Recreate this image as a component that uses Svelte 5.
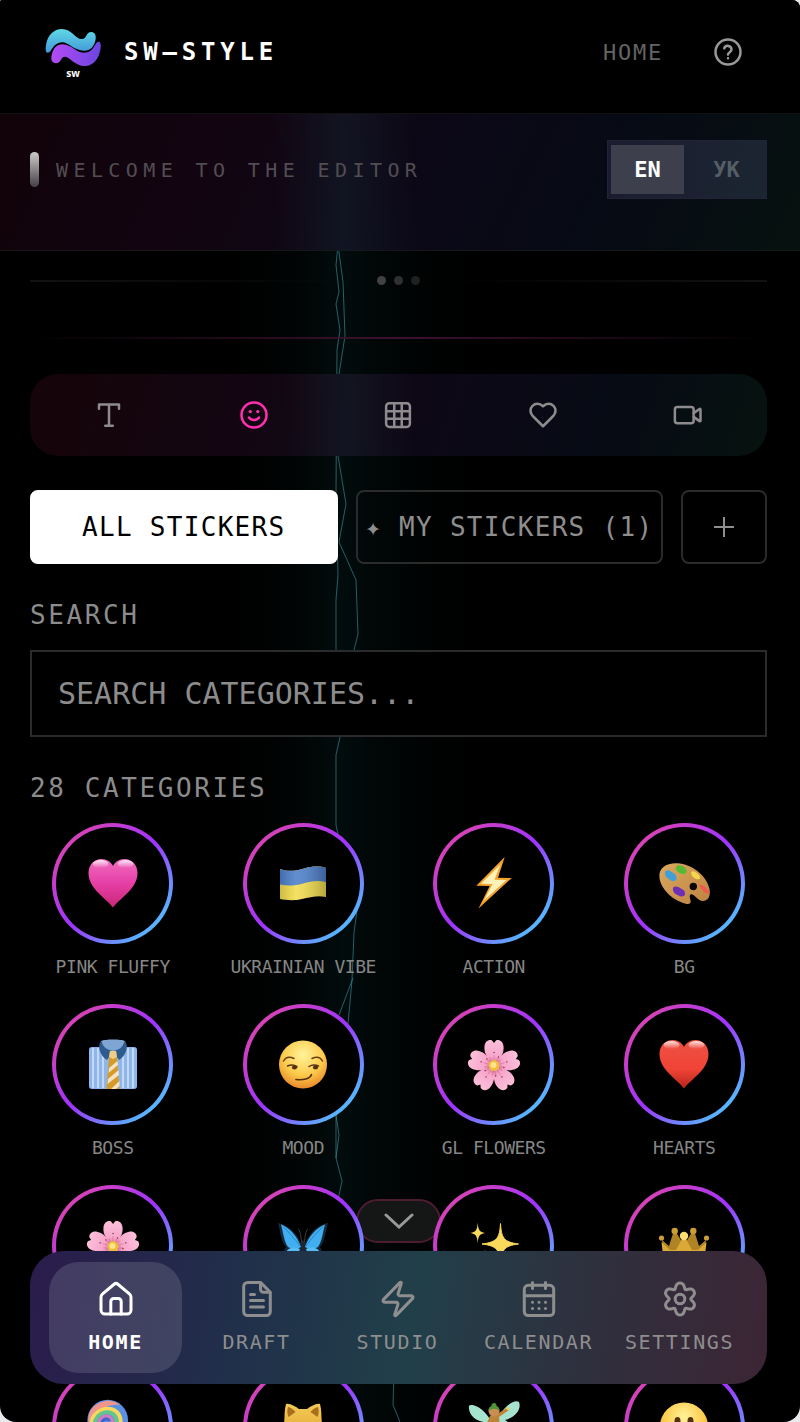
<script lang="ts">
  type Category = { name: string; icon: string };

  const tools = ['Text', 'Stickers', 'Grid', 'Favorites', 'Video'];
  const navItems = ['Home', 'Draft', 'Studio', 'Calendar', 'Settings'];

  const categories: Category[] = [
    { name: 'Pink Fluffy', icon: 'pinkHeart' },
    { name: 'Ukrainian Vibe', icon: 'flag' },
    { name: 'Action', icon: 'bolt' },
    { name: 'BG', icon: 'palette' },
    { name: 'Boss', icon: 'tie' },
    { name: 'Mood', icon: 'smirk' },
    { name: 'GL Flowers', icon: 'flower' },
    { name: 'Hearts', icon: 'redHeart' },
    { name: '', icon: 'flower' },
    { name: '', icon: 'butterfly' },
    { name: '', icon: 'sparkles' },
    { name: '', icon: 'crown' },
    { name: '', icon: 'lollipop' },
    { name: '', icon: 'cat' },
    { name: '', icon: 'fairy' },
    { name: '', icon: 'smile' }
  ];

  let lang = $state('EN');
  let activeTool = $state('Stickers');
  let activeTab = $state('all');
  let activeNav = $state('Home');
  let query = $state('');

  let visible = $derived(
    categories.filter((c) => c.name.toLowerCase().includes(query.toLowerCase()))
  );

  const heart =
    'M26 49.500C20 41 1.500 31 1.500 15C1.500 6.500 7.500 1 14.500 1C20 1 24 4 26 8C28 4 32 1 37.500 1C44.500 1 50.500 6.500 50.500 15C50.500 31 32 41 26 49.500Z';

  const shine = `
    <ellipse cx="13.500" cy="6" rx="8" ry="4" fill="url(#shine)"/>
    <ellipse cx="38.500" cy="6" rx="8" ry="4" fill="url(#shine)"/>`;

  const petals = [0, 72, 144, 216, 288]
    .map(
      (a) => `<g transform="rotate(${a} 26 27)">
        <path d="M26 25C20 21 15.500 14 16.500 7C17 2.500 21 0 24 1.500L26 4L28 1.500C31 0 35 2.500 35.500 7C36.500 14 32 21 26 25Z" fill="url(#petal)"/>
        <path d="M26 24V16M23.500 22L22 18M28.500 22L30 18" stroke="#d3628f" stroke-width=".5" fill="none"/>
        <circle cx="26" cy="13.500" r=".7" fill="#7b2846"/>
        <circle cx="30.500" cy="18" r=".7" fill="#7b2846"/>
      </g>`
    )
    .join('');

  const art: Record<string, string> = {
    pinkHeart: `<path d="${heart}" fill="url(#pink)"/>${shine}`,
    redHeart: `<path d="${heart}" fill="url(#red)"/>${shine}`,
    flag: `
      <path d="M3 11C11 14 19 13 27 10.500C36 8 43 8 49 10V39C41 37 33 39 25 41C17 43 9 42 3 41Z" fill="#f3dc4c"/>
      <path d="M3 11C11 14 19 13 27 10.500C36 8 43 8 49 10V24C41 22 34 23 26 25.500C18 28 10 28 3 26.500Z" fill="#4d7fcb"/>
      <path d="M3 11C11 14 19 13 27 10.500C36 8 43 8 49 10V39C41 37 33 39 25 41C17 43 9 42 3 41Z" fill="url(#fold)"/>`,
    bolt: `
      <path d="M36.700 -1L8.300 27.700L21.700 28L10.500 50.500L43.700 20L30 19.700Z" fill="#f5a32c"/>
      <path d="M32.500 6.500L13 25.800L24.500 26L16 42.500L38.500 22L26.500 21.700Z" fill="#fff2b8"/>`,
    palette: `
      <path d="M1.500 20C0 9 10 4 22 5.500C37 8 49 19 51.500 31C53 38 50 43 45 43C40 43 38 38 34.500 36.500C31 35 31.500 39 32.500 42C33.500 45.500 31 47 27 45.500C14 42 3 31 1.500 20Z" fill="url(#wood)"/>
      <circle cx="35.300" cy="28.500" r="3.700" fill="#0b0705"/>
      <path d="M7 14C10 10 13 14 16 15.500C18.500 17 19 20 18 22C15 25 12 22 10 20.500C7.500 19 7 17 7 14Z" fill="#3f9fd8"/>
      <path d="M18 9C20 6 24 7.500 26 9C28.500 11 29.500 14 27.500 15.500C24 17 21 15 19.500 13.500C18 12 17.500 11 18 9Z" fill="#56b934"/>
      <path d="M33 14C35 12 38 14 40 16C42 18 43 20 41.500 21C38 22 36 20 34.500 18.500C33.500 17 33 15.500 33 14Z" fill="#f5d64b"/>
      <path d="M41.500 27C44 26 47 29 49 31C51 33 52 35 50.500 35.500C47.500 36 45 33 43.500 31C42 29 41.500 28 41.500 27Z" fill="#ef5a4c"/>
      <path d="M15 30C17 27 21 29 23.500 31C26.500 32 28 35 26.500 37.500C23 40 20 37 18.500 36.500C15.500 35 14.500 32 15 30Z" fill="#6d2db5"/>`,
    tie: `
      <rect x="2" y="8" width="48" height="42" rx="3" fill="#8fb6e8"/>
      <path d="M6 9V49M11 9V49M16 9V49M36 9V49M41 9V49M46 9V49" stroke="#d3e4f7" stroke-width="1.500"/>
      <path d="M14 2C18 0 34 0 38 2L34 12H18Z" fill="#7fa6d2"/>
      <path d="M14 2C10 7 13 17 20 21L26 12C20 11 16 8 14 2Z" fill="#2e5c90"/>
      <path d="M38 2C42 7 39 17 32 21L26 12C32 11 36 8 38 2Z" fill="#2e5c90"/>
      <path d="M23 12H29L30 19L32.500 50H19.500L22 19Z" fill="#d69a28"/>
      <path d="M22 29L30.500 22L31 26L21.500 34ZM21 40L31.500 31L32 36L20.500 45ZM24 50L32.500 42V47L29 50Z" fill="#f4e3c4"/>
      <path d="M23 12H29L30 18L26 20L22 18Z" fill="#efcc88"/>`,
    smirk: `
      <circle cx="26" cy="25.500" r="24" fill="url(#face)"/>
      <path d="M6.500 22C9 17.500 13 17.500 17 19.500M35 19.500C39 17.500 43 17.500 45.500 22" stroke="#6b3d12" stroke-width="1.500" fill="none" stroke-linecap="round"/>
      <path d="M10.500 27C14 25.500 17 25.500 20 27.500M32 27.500C35 25.500 38 25.500 41.500 27" stroke="#54300e" stroke-width="1.500" fill="none" stroke-linecap="round"/>
      <ellipse cx="17.500" cy="28.500" rx="2.600" ry="2" fill="#54300e"/>
      <ellipse cx="38.500" cy="28.500" rx="2.600" ry="2" fill="#54300e"/>
      <path d="M19 40.500C26 41.500 33 40 34.500 35.500" stroke="#54300e" stroke-width="1.600" fill="none" stroke-linecap="round"/>`,
    flower: `${petals}<circle cx="26" cy="26.500" r="5.500" fill="#eebd3c"/><circle cx="25.500" cy="26" r="3" fill="#fbe489"/>`,
    butterfly: `
      <path d="M25 26C21 14 12 5 1 3C3 10 4 22 9 27C5 32 8 40 13 44C19 48 25 38 26 31C27 38 33 48 39 44C44 40 47 32 43 27C48 22 49 10 51 3C40 5 31 14 27 26Z" fill="#15283c"/>
      <path d="M24 27C20 16 13 8 4 4.500C6 11 7 22 11 27C15 29 20 29 24 27ZM28 27C32 16 39 8 48 4.500C46 11 45 22 41 27C37 29 32 29 28 27Z" fill="#40aef0"/>
      <path d="M23 29C17 26 9 28 9 34C11 42 19 42 23 29ZM29 29C35 26 43 28 43 34C41 42 33 42 29 29Z" fill="#56bdf6"/>
      <path d="M23 26C17 18 12 12 6 7M29 26C35 18 40 12 46 7" stroke="#2787c8" stroke-width="1" fill="none"/>
      <path d="M25 25C24 18 24 13 21.500 9M27 25C28 18 28 13 30.500 9" stroke="#3a3a3a" stroke-width="1" fill="none"/>
      <ellipse cx="26" cy="29" rx="2" ry="9" fill="#20252c"/>`,
    sparkles: `
      <path d="M32.500 3.500C33.500 18 35.500 22 50.500 24C35.500 26 33.500 30 32.500 45C31.500 30 29.500 26 14 24C29.500 22 31.500 18 32.500 3.500Z" fill="#f9d85b" stroke="#f9d85b" stroke-width="1"/>
      <path d="M9.700 2.500C10.200 10 11.500 12 17 13C11.500 14 10.200 16 9.700 23.500C9.200 16 8 14 2.500 13C8 12 9.200 10 9.700 2.500Z" fill="#f9d85b"/>
      <path d="M17 29C17.500 35 18.500 37 24 38C18.500 39 17.500 41 17 47C16.500 41 15.500 39 10 38C15.500 37 16.500 35 17 29Z" fill="#f3b93c"/>`,
    crown: `
      <path d="M6 38L4 20L11 26L15.500 12H18L24 22H28L34 12H36.500L41 26L48 20L46 38Z" fill="#b08424"/>
      <path d="M6 44L3.500 22L12 30H18L24.500 18H27.500L34 30H40L48.500 22L46 44Q26 49 6 44Z" fill="#dba938"/>
      <g fill="#cd9e34"><circle cx="3.500" cy="18" r="2.600"/><circle cx="16.700" cy="11" r="3.200"/><circle cx="35.300" cy="11" r="3.200"/><circle cx="48.500" cy="18" r="2.600"/></g>
      <circle cx="26" cy="16" r="4.200" fill="#f9dc72"/>
      <path d="M4 33H48" stroke="#5bb9a0" stroke-width="2"/>`,
    lollipop: `
      <path d="M30 30L48 50" stroke="#e8e8ea" stroke-width="3"/>
      <circle cx="20.700" cy="19" r="20.300" fill="#5b8fe4"/>
      <path d="M1 19A20 20 0 0 1 33 4C25 3 8 6 5 26Z" fill="#f0958c"/>
      <path d="M4 25C4 8 25 2 32 14C37 24 28 34 19 33" stroke="#f6d85c" stroke-width="4" fill="none"/>
      <path d="M8 28C5 14 20 6 28 15C32 22 26 29 19 28" stroke="#64c58c" stroke-width="4" fill="none"/>
      <path d="M12 27C9 17 20 11 25 18C27 23 20 27 18 22" stroke="#d878bf" stroke-width="3" fill="none"/>
      <path d="M15 24C14 18 21 16 22 20" stroke="#3f66c8" stroke-width="3" fill="none"/>`,
    cat: `
      <path d="M9 3C13 2 19 6 22 8H30C33 6 39 2 43 3C45 10 44 16 45 22C47 38 38 46 26 46C14 46 5 38 7 22C8 16 7 10 9 3Z" fill="url(#cat)"/>
      <path d="M11 6C13 6 17 9 18.500 11L11.500 16C10 13 10 9 11 6ZM41 6C39 6 35 9 33.500 11L40.500 16C42 13 42 9 41 6Z" fill="#a86f1c"/>
      <circle cx="17" cy="25" r="3" fill="#3c2b12"/><circle cx="35" cy="25" r="3" fill="#3c2b12"/>`,
    fairy: `
      <path d="M24 22C18 8 4 1 1 5C0 14 8 20 16 21C10 25 12 34 20 30ZM29 20C34 6 46-2 51 1C54 9 46 17 37 19C44 22 42 32 33 29Z" fill="#a5e3cf"/>
      <path d="M22 15L18 24L22 34H33L31 16L41 9L39 7L29 13Z" fill="#bd8438"/>
      <circle cx="26" cy="10" r="5.500" fill="#c98e53"/>
      <path d="M20.500 10C20 3 32 3 31.500 10C29 7 24 7 20.500 10Z" fill="#4f9638"/>
      <circle cx="26" cy="4.500" r="2.500" fill="#4f9638"/>
      <circle cx="40" cy="7.500" r="1.600" fill="#f2cf57"/>`,
    smile: `
      <circle cx="26" cy="25.500" r="24" fill="url(#face)"/>
      <ellipse cx="19.500" cy="20" rx="3" ry="4" fill="#54300e"/><ellipse cx="32.500" cy="20" rx="3" ry="4" fill="#54300e"/>
      <path d="M14 32C20 40 32 40 38 32" stroke="#54300e" stroke-width="2" fill="none"/>`
  };

  // Six-lobed cog outline around (20, 20)
  const gear =
    'M' +
    Array.from({ length: 90 }, (_, i) => {
      const a = (i / 90) * Math.PI * 2;
      const r = 13.8 + 2.6 * Math.cos(6 * a) - 0.4 * Math.cos(12 * a);
      return `${(20 + r * Math.sin(a)).toFixed(2)} ${(20 - r * Math.cos(a)).toFixed(2)}`;
    }).join('L') +
    'Z';
</script>

{#snippet toolIcon(name: string)}
  <svg class="icon" viewBox="0 0 24 24" aria-hidden="true">
    {#if name === 'Text'}
      <path d="M4 7V3.500h16V7M9 20.500h6M12 3.500v17" />
    {:else if name === 'Stickers'}
      <circle cx="12" cy="12" r="10" />
      <path d="M8 14s1.500 2 4 2 4-2 4-2" />
      <circle class="dot" cx="9" cy="9.200" r="1.300" />
      <circle class="dot" cx="15" cy="9.200" r="1.300" />
    {:else if name === 'Grid'}
      <rect x="2.500" y="2.500" width="19" height="19" rx="2.500" />
      <path d="M2.500 9h19M2.500 15h19M9 2.500v19M15 2.500v19" />
    {:else if name === 'Favorites'}
      <path d="M19 14c1.490-1.460 3-3.210 3-5.500A5.500 5.500 0 0 0 16.500 3c-1.760 0-3 .5-4.500 2-1.500-1.500-2.740-2-4.500-2A5.500 5.500 0 0 0 2 8.500c0 2.300 1.500 4.050 3 5.500l7 7Z" />
    {:else}
      <rect x="1.500" y="5.500" width="15" height="13" rx="2" />
      <path d="m16.500 13.500 4.700 3.400a.5.5 0 0 0 .8-.4V7.500a.5.5 0 0 0-.8-.4L16.500 10.500" />
    {/if}
  </svg>
{/snippet}

{#snippet navIcon(name: string)}
  <svg class="nav-icon" viewBox="0 0 40 40" aria-hidden="true">
    {#if name === 'Home'}
      <path d="M5 31V18.200c0-1.300.6-2.500 1.600-3.300L18.400 5a2.500 2.500 0 0 1 3.200 0l11.800 9.900c1 .8 1.600 2 1.600 3.300V31a4 4 0 0 1-4 4H9a4 4 0 0 1-4-4Z" />
      <path d="M14.800 35V22.500a3 3 0 0 1 3-3h4.400a3 3 0 0 1 3 3V35" />
    {:else if name === 'Draft'}
      <path d="M23.500 3.400H10.700a4 4 0 0 0-4 4v25.200a4 4 0 0 0 4 4h18.600a4 4 0 0 0 4-4V13.200Z" />
      <path d="M23.500 4v6.200a3 3 0 0 0 3 3h6.500M13.500 15.500h4M13.500 21.500h13M13.500 28h13" />
    {:else if name === 'Studio'}
      <path transform="scale(1.667)" stroke-width="1.8" d="M4 14a1 1 0 0 1-.78-1.630l9.900-10.200a.5.5 0 0 1 .86.46l-1.920 6.020A1 1 0 0 0 13 10h7a1 1 0 0 1 .78 1.630l-9.900 10.200a.5.5 0 0 1-.86-.46l1.920-6.020A1 1 0 0 0 11 14z" />
    {:else if name === 'Calendar'}
      <rect x="5.300" y="6.300" width="29.400" height="30.300" rx="4" />
      <path d="M5.300 16.700h29.400M13.500 3.400v6M26.500 3.400v6M13.500 23.200h.01M20 23.200h.01M26.500 23.200h.01M13.500 29.500h.01M20 29.500h.01M26.500 29.500h.01" />
    {:else}
      <path d={gear} />
      <circle cx="20" cy="20" r="4.800" />
    {/if}
  </svg>
{/snippet}

<div class="app">
  <svg class="defs" aria-hidden="true">
    <defs>
      <linearGradient id="pink" x2="0" y2="1">
        <stop offset="0" stop-color="#f06cc0" /><stop offset=".5" stop-color="#e63fa6" /><stop offset="1" stop-color="#c92677" />
      </linearGradient>
      <linearGradient id="red" x2="0" y2="1">
        <stop offset="0" stop-color="#ee5144" /><stop offset=".6" stop-color="#f04437" /><stop offset="1" stop-color="#b82419" />
      </linearGradient>
      <linearGradient id="shine" x2="0" y2="1">
        <stop offset="0" stop-color="#fff" stop-opacity=".85" /><stop offset="1" stop-color="#fff" stop-opacity="0" />
      </linearGradient>
      <linearGradient id="fold">
        <stop offset="0" stop-color="#000" stop-opacity=".15" /><stop offset=".35" stop-color="#fff" stop-opacity=".12" /><stop offset="1" stop-color="#000" stop-opacity=".25" />
      </linearGradient>
      <linearGradient id="wood" x2="1" y2="1">
        <stop offset="0" stop-color="#dba95d" /><stop offset="1" stop-color="#bd8243" />
      </linearGradient>
      <linearGradient id="petal" x2="0" y2="1">
        <stop offset="0" stop-color="#fcc0da" /><stop offset=".7" stop-color="#f7a6cc" /><stop offset="1" stop-color="#dc6f9b" />
      </linearGradient>
      <linearGradient id="cat" x2="0" y2="1">
        <stop offset="0" stop-color="#f4cb58" /><stop offset="1" stop-color="#dd9c2b" />
      </linearGradient>
      <radialGradient id="face" cx=".5" cy=".3" r=".7">
        <stop offset="0" stop-color="#fff39a" /><stop offset=".6" stop-color="#fccb4c" /><stop offset="1" stop-color="#e8892a" />
      </radialGradient>
      <linearGradient id="logoTop" x2="0" y2="1">
        <stop offset="0" stop-color="#5fd9e6" /><stop offset="1" stop-color="#4496d8" />
      </linearGradient>
      <linearGradient id="logoBottom" x2="1" y2="0">
        <stop offset="0" stop-color="#b44bf5" /><stop offset="1" stop-color="#6a45e0" />
      </linearGradient>
    </defs>
  </svg>

  <div class="glow"></div>
  <svg class="lightning" viewBox="0 0 80 1422" aria-hidden="true">
    <path d="M18 245L16 265L19 292L16 304L20 330L17 350L16 490L18 575L16 600V660" />
    <path d="M18 245L23 282L25 336L19 374L18 456L26 504L19 542L36 580L38 634L34 650" />
    <path d="M24 700L20 737L16 755V825L18 834M37 910L34 933L32 980L28 1024M33 978L19 1015" />
    <path d="M16 1115L19 1135L16 1158L22 1181L18 1200M16 1115V1158M74 1370L73 1405L80 1422" />
  </svg>

  <header class="topbar">
    <a class="brand" href="#home">
      <svg class="logo" viewBox="0 0 56 52" aria-hidden="true">
        <path d="M2.300 26.700C0 26 .8 21 1 19C2.500 9 9 3 17 3C27 3 31 14 37.500 13C42.500 12 40.500 6 46.500 6C50 6.200 51.500 10 50.500 14C49 21 45 25 39 24.700C29 24.500 23 15.800 16.500 16.300C7 17 7 27.500 2.300 26.700Z" fill="url(#logoTop)" />
        <path d="M53.700 15.700C56.500 16 55.800 21 55.500 23C54 33 48 40 40 40C29 40 25 30.500 20 30.700C15 31 16.500 37.300 11 37.300C7 37 5.500 34 6.700 29C8.300 22 12 18.200 17.500 18.300C27 18.600 31 26.700 38.500 26.700C50 26.500 49 16 53.700 15.700Z" fill="url(#logoBottom)" />
        <text x="28" y="51" text-anchor="middle">sw</text>
      </svg>
      <span>SW—STYLE</span>
    </a>
    <div class="top-links">
      <a href="#home">HOME</a>
      <button class="help" aria-label="Help">
        <svg class="icon" viewBox="0 0 24 24" aria-hidden="true">
          <circle cx="12" cy="12" r="10" />
          <path d="M9 9a3 3 0 0 1 5.800 1c0 2-2.800 2.500-2.800 4M12 17h.01" />
        </svg>
      </button>
    </div>
  </header>

  <section class="banner">
    <div class="welcome">
      <span class="bar"></span>
      <span>WELCOME TO THE EDITOR</span>
    </div>
    <div class="lang">
      {#each ['EN', 'УК'] as code}
        <button class:active={lang === code} onclick={() => (lang = code)}>{code}</button>
      {/each}
    </div>
  </section>

  <main>
    <div class="divider">
      <span class="line"></span>
      <i></i><i></i><i></i>
      <span class="line right"></span>
    </div>
    <div class="pink-line"></div>

    <div class="toolbar">
      {#each tools as tool}
        <button class:active={activeTool === tool} aria-label={tool} onclick={() => (activeTool = tool)}>
          {@render toolIcon(tool)}
        </button>
      {/each}
    </div>

    <div class="tabs">
      <button class:active={activeTab === 'all'} onclick={() => (activeTab = 'all')}>ALL STICKERS</button>
      <button class:active={activeTab === 'my'} onclick={() => (activeTab = 'my')}>✦ MY STICKERS (1)</button>
      <button class="add" aria-label="Add sticker">
        <svg viewBox="0 0 20 20" aria-hidden="true"><path d="M0 10h20M10 0v20" /></svg>
      </button>
    </div>

    <label class="caption" for="search">SEARCH</label>
    <input id="search" type="text" placeholder="SEARCH CATEGORIES..." bind:value={query} />

    <h2 class="caption">28 CATEGORIES</h2>
    <div class="grid">
      {#each visible as category}
        <button class="category" aria-label={category.name || category.icon}>
          <span class="ring">
            <svg viewBox="0 0 52 52" aria-hidden="true">{@html art[category.icon]}</svg>
          </span>
          <span class="name">{category.name.toUpperCase()}</span>
        </button>
      {/each}
    </div>
  </main>

  <button class="scroll-down" aria-label="Scroll down">
    <svg viewBox="0 0 30 16" aria-hidden="true"><path d="M2 2l13 12L28 2" /></svg>
  </button>

  <nav class="bottom-nav">
    {#each navItems as item}
      <a href="#{item.toLowerCase()}" class:active={activeNav === item} onclick={() => (activeNav = item)}>
        {@render navIcon(item)}
        <span>{item.toUpperCase()}</span>
      </a>
    {/each}
  </nav>
</div>

<style>
  :global(body) {
    background: #e9e9ec;
  }

  .app {
    --beam: linear-gradient(90deg, transparent 34%, rgba(26, 52, 64, 0.3) 43%, transparent 52%);
    position: relative;
    height: 100vh;
    overflow: hidden;
    background: #000;
    border-radius: 2px 8px 16px 16px;
    color: #8e8e8e;
    font-family: 'DejaVu Sans Mono', Menlo, monospace;
  }

  .app * {
    box-sizing: border-box;
  }

  button {
    margin: 0;
    padding: 0;
    border: 0;
    background: none;
    color: inherit;
    font: inherit;
    cursor: pointer;
  }

  a {
    color: inherit;
    text-decoration: none;
  }

  svg {
    display: block;
  }

  .defs {
    position: absolute;
    width: 0;
    height: 0;
  }

  .glow {
    position: absolute;
    top: 0;
    bottom: 0;
    left: 29%;
    width: 30%;
    background: linear-gradient(90deg, transparent, #010505 30%, #020c0d 46%, #010606 60%, transparent);
  }

  .lightning {
    position: absolute;
    top: 0;
    left: 40%;
    width: 80px;
    height: 1422px;
    fill: none;
    stroke: #3c9aa0;
    stroke-opacity: 0.6;
    stroke-width: 1;
  }

  .icon {
    width: 30px;
    height: 30px;
    fill: none;
    stroke: currentColor;
    stroke-width: 2;
    stroke-linecap: round;
    stroke-linejoin: round;
  }

  .dot {
    fill: currentColor;
    stroke: none;
  }

  .topbar {
    position: relative;
    display: flex;
    align-items: center;
    justify-content: space-between;
    padding: 26px 57px 35px 45px;
    background: #000;
    border-bottom: 1px solid #111;
  }

  .brand {
    display: flex;
    align-items: center;
    gap: 23px;
    color: #fff;
    font-size: 24px;
    font-weight: 700;
    letter-spacing: 0.2em;
  }

  .logo {
    width: 56px;
    height: 52px;
    overflow: visible;
  }

  .logo text {
    fill: #fff;
    font: 700 10px 'Open Sans', sans-serif;
    letter-spacing: 0;
  }

  .top-links {
    display: flex;
    align-items: center;
    gap: 50px;
    color: #646464;
    font-size: 22px;
    letter-spacing: 0.08em;
  }

  .help {
    color: #999;
  }

  .banner {
    position: relative;
    display: flex;
    align-items: center;
    justify-content: space-between;
    padding: 26px 33px 51px 30px;
    background:
      var(--beam),
      linear-gradient(115deg, #120309, #120512 30%, #0b0817 55%, #060b14 78%, #07120f);
    border-bottom: 1px solid #151817;
  }

  .welcome {
    display: flex;
    align-items: center;
    gap: 17px;
    color: #524d53;
    font-size: 20px;
    letter-spacing: 0.27em;
  }

  .bar {
    width: 9px;
    height: 35px;
    border-radius: 5px;
    background: linear-gradient(#ccc, #463f44);
  }

  .lang {
    display: flex;
    gap: 6px;
    width: 160px;
    height: 59px;
    padding: 4px 3px;
    border: 1px solid #222238;
    background: linear-gradient(100deg, #1c1b30, #1b2631);
    font-size: 22px;
    font-weight: 700;
    color: #555d66;
  }

  .lang button {
    flex: 1;
  }

  .lang .active {
    background: #3e3f4d;
    color: #fff;
  }

  main {
    position: relative;
    z-index: 1;
    padding: 25px 33px 0 30px;
  }

  .divider {
    display: flex;
    align-items: center;
    gap: 8px;
  }

  .divider i {
    width: 9px;
    height: 9px;
    border-radius: 50%;
    background: #424242;
  }

  .divider i:nth-of-type(2) {
    background: #303030;
  }

  .divider i:nth-of-type(3) {
    background: #202020;
  }

  .line {
    flex: 1;
    height: 2px;
    margin-right: 18px;
    background: linear-gradient(90deg, #121212, transparent);
  }

  .line.right {
    margin: 0 0 0 18px;
    background: linear-gradient(270deg, #121212, transparent);
  }

  .pink-line {
    height: 2px;
    margin: 52px 0 35px;
    background: linear-gradient(90deg, transparent, #3d1130 50%, transparent);
  }

  .toolbar {
    display: grid;
    grid-template-columns: repeat(5, 1fr);
    height: 82px;
    padding: 0 7px;
    border-radius: 28px;
    background:
      var(--beam),
      linear-gradient(108deg, #150408, #130612 30%, #0d0816 55%, #060b14 80%, #07130f);
  }

  .toolbar button {
    display: grid;
    place-items: center;
    color: #8e8b8e;
  }

  .toolbar .active {
    color: #ff2fae;
  }

  .tabs {
    display: flex;
    gap: 18px;
    margin: 34px 0 35px;
  }

  .tabs button {
    flex: 1;
    height: 74px;
    border: 2px solid #2b2b2b;
    border-radius: 8px;
    font-size: 26px;
    letter-spacing: 0.05em;
    white-space: nowrap;
  }

  .tabs .active {
    border-color: #fff;
    background: #fff;
    color: #000;
  }

  .tabs .add {
    display: grid;
    place-items: center;
    flex: 0 0 86px;
  }

  .add svg {
    width: 20px;
    height: 20px;
    stroke: currentColor;
    stroke-width: 2;
  }

  .caption {
    display: block;
    margin: 0;
    font-size: 26px;
    font-weight: 400;
    line-height: 32px;
    letter-spacing: 0.1em;
    color: #8c8c8c;
  }

  input {
    display: block;
    width: 100%;
    height: 87px;
    margin: 19px 0 35px;
    padding: 0 26px;
    border: 2px solid #2b2b2b;
    border-radius: 0;
    outline: none;
    background: #000;
    color: #fff;
    font: 30px 'DejaVu Sans Mono', Menlo, monospace;
  }

  input::placeholder {
    color: #8c8c8c;
    opacity: 1;
  }

  .grid {
    display: grid;
    grid-template-columns: repeat(4, 1fr);
    gap: 25px;
    margin-top: 19px;
  }

  .category {
    display: flex;
    flex-direction: column;
    align-items: center;
    gap: 11px;
  }

  .ring {
    display: grid;
    place-items: center;
    width: 121px;
    height: 121px;
    border: 4px solid transparent;
    border-radius: 50%;
    background:
      linear-gradient(#000, #000) padding-box,
      linear-gradient(135deg, #ec4899, #a133ff 50%, #54baff 86%) border-box;
  }

  .ring svg {
    width: 52px;
    height: 52px;
    overflow: visible;
  }

  .name {
    height: 24px;
    font-size: 18px;
    line-height: 24px;
    letter-spacing: -0.025em;
    white-space: nowrap;
    color: #868686;
  }

  .scroll-down {
    position: absolute;
    bottom: 179px;
    left: 50%;
    display: grid;
    place-items: center;
    width: 85px;
    height: 44px;
    margin-left: -44px;
    border: 2px solid #4d1c30;
    border-radius: 22px;
    background: #151616;
  }

  .scroll-down svg {
    width: 30px;
    height: 16px;
    fill: none;
    stroke: #999;
    stroke-width: 3;
    stroke-linecap: round;
  }

  .bottom-nav {
    position: absolute;
    z-index: 2;
    right: 33px;
    bottom: 38px;
    left: 30px;
    display: grid;
    grid-template-columns: repeat(5, 1fr);
    gap: 8px;
    padding: 11px 21px 11px 19px;
    border-radius: 34px;
    background: linear-gradient(98deg, #2a1c4c, #20304a 30%, #213f49 52%, #2f303e 75%, #3c2535);
  }

  .bottom-nav a {
    display: flex;
    flex-direction: column;
    align-items: center;
    gap: 11px;
    height: 111px;
    padding-top: 17px;
    border-radius: 30px;
    font-size: 20px;
    line-height: 24px;
    letter-spacing: 0.08em;
  }

  .bottom-nav .active {
    background: rgba(255, 255, 255, 0.13);
    color: #fff;
    font-weight: 700;
  }

  .nav-icon {
    width: 40px;
    height: 40px;
    fill: none;
    stroke: currentColor;
    stroke-width: 3;
    stroke-linecap: round;
    stroke-linejoin: round;
  }
</style>
